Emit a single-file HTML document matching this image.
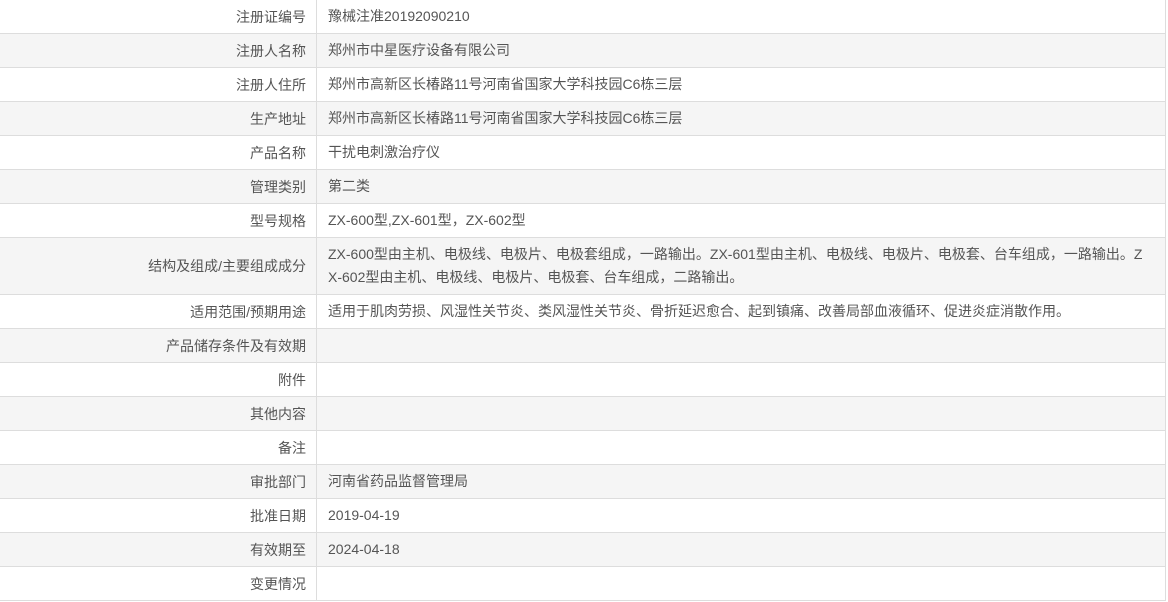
<!DOCTYPE html>
<html><head><meta charset="utf-8"><style>
html,body{margin:0;padding:0;background:#fff;width:1168px;height:602px;overflow:hidden}
table{position:absolute;left:-1px;top:-1px;border-collapse:collapse;width:1167px;font-family:"Liberation Sans","Noto Sans CJK SC",sans-serif;font-size:14px;color:#555}
td{border:1px solid #ddd;height:34px;padding:0;box-sizing:border-box;vertical-align:middle}
td.l{width:317px;text-align:right;padding-right:10px}
td.v{padding-left:11px;padding-right:4px;word-break:break-all;line-height:23px}
tr:nth-child(even) td{background:#f5f5f5}
tr.t td{height:57px}
</style></head><body>
<table>
<tr><td class="l">注册证编号</td><td class="v">豫械注准20192090210</td></tr>
<tr><td class="l">注册人名称</td><td class="v">郑州市中星医疗设备有限公司</td></tr>
<tr><td class="l">注册人住所</td><td class="v">郑州市高新区长椿路11号河南省国家大学科技园C6栋三层</td></tr>
<tr><td class="l">生产地址</td><td class="v">郑州市高新区长椿路11号河南省国家大学科技园C6栋三层</td></tr>
<tr><td class="l">产品名称</td><td class="v">干扰电刺激治疗仪</td></tr>
<tr><td class="l">管理类别</td><td class="v">第二类</td></tr>
<tr><td class="l">型号规格</td><td class="v">ZX-600型,ZX-601型，ZX-602型</td></tr>
<tr class="t"><td class="l">结构及组成/主要组成成分</td><td class="v">ZX-600型由主机、电极线、电极片、电极套组成，一路输出。ZX-601型由主机、电极线、电极片、电极套、台车组成，一路输出。Z<br>X-602型由主机、电极线、电极片、电极套、台车组成，二路输出。</td></tr>
<tr><td class="l">适用范围/预期用途</td><td class="v">适用于肌肉劳损、风湿性关节炎、类风湿性关节炎、骨折延迟愈合、起到镇痛、改善局部血液循环、促进炎症消散作用。</td></tr>
<tr><td class="l">产品储存条件及有效期</td><td class="v"></td></tr>
<tr><td class="l">附件</td><td class="v"></td></tr>
<tr><td class="l">其他内容</td><td class="v"></td></tr>
<tr><td class="l">备注</td><td class="v"></td></tr>
<tr><td class="l">审批部门</td><td class="v">河南省药品监督管理局</td></tr>
<tr><td class="l">批准日期</td><td class="v">2019-04-19</td></tr>
<tr><td class="l">有效期至</td><td class="v">2024-04-18</td></tr>
<tr><td class="l">变更情况</td><td class="v"></td></tr>
</table>
</body></html>
